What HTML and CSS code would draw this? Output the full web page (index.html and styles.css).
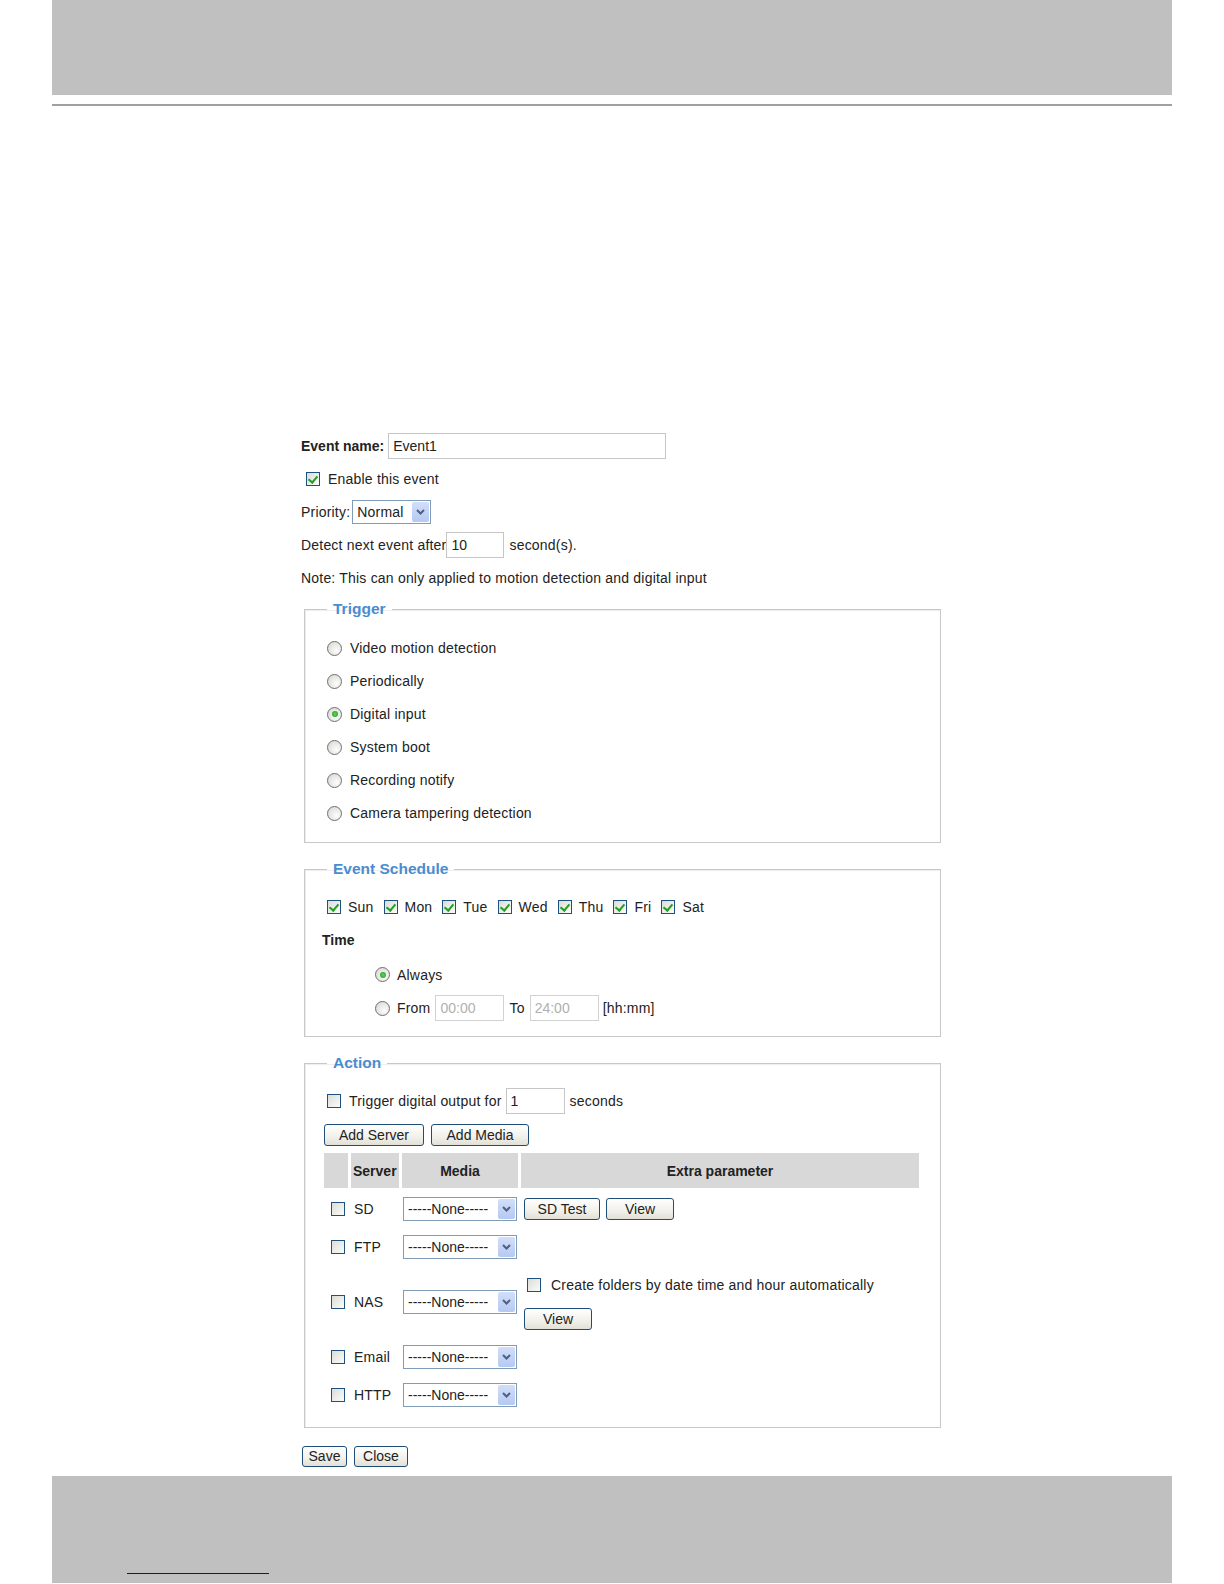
FILE: index.html
```html
<!DOCTYPE html>
<html lang="en">
<head>
    <meta charset="UTF-8">
    <title>Event Settings</title>
    <link rel="stylesheet" href="styles.css">
</head>
<body>
<div class="page-header"></div>
<div class="rule"></div>

<div class="form">
    <div class="row">
        <span class="bold">Event name:</span>
        <input class="text-input name-input" type="text" value="Event1">
    </div>
    <div class="row indent">
        <span class="check on"></span>
        <span class="after-box">Enable this event</span>
    </div>
    <div class="row">
        <span>Priority:</span>
        <span class="select priority-select">
            <span class="select-text">Normal</span>
            <span class="select-btn"><svg width="9" height="6" viewBox="0 0 9 6"><path d="M1 1 L4.5 4.5 L8 1" fill="none" stroke="#4d6185" stroke-width="2"/></svg></span>
        </span>
    </div>
    <div class="row">
        <span>Detect next event after</span>
        <input class="text-input detect-input" type="text" value="10">
        <span class="unit">second(s).</span>
    </div>
    <div class="row">
        <span>Note: This can only applied to motion detection and digital input</span>
    </div>

    <!-- Trigger -->
    <fieldset class="box trigger-box">
        <legend>Trigger</legend>
        <div class="row"><span class="radio"></span><span class="after-box">Video motion detection</span></div>
        <div class="row"><span class="radio"></span><span class="after-box">Periodically</span></div>
        <div class="row"><span class="radio on"></span><span class="after-box">Digital input</span></div>
        <div class="row"><span class="radio"></span><span class="after-box">System boot</span></div>
        <div class="row"><span class="radio"></span><span class="after-box">Recording notify</span></div>
        <div class="row"><span class="radio"></span><span class="after-box">Camera tampering detection</span></div>
    </fieldset>

    <!-- Event Schedule -->
    <fieldset class="box schedule-box">
        <legend>Event Schedule</legend>
        <div class="row days">
            <span class="check on"></span><span class="day">Sun</span>
            <span class="check on"></span><span class="day">Mon</span>
            <span class="check on"></span><span class="day">Tue</span>
            <span class="check on"></span><span class="day">Wed</span>
            <span class="check on"></span><span class="day">Thu</span>
            <span class="check on"></span><span class="day">Fri</span>
            <span class="check on"></span><span class="day">Sat</span>
        </div>
        <div class="row time-title"><span class="bold">Time</span></div>
        <div class="row time-row always-row"><span class="radio on"></span><span class="after-box">Always</span></div>
        <div class="row time-row from-row">
            <span class="radio"></span><span class="after-box">From</span>
            <input class="text-input time-input" type="text" value="00:00" disabled>
            <span class="to-label">To</span>
            <input class="text-input time-input" type="text" value="24:00" disabled>
            <span class="hint">[hh:mm]</span>
        </div>
    </fieldset>

    <!-- Action -->
    <fieldset class="box action-box">
        <legend>Action</legend>
        <div class="row">
            <span class="check"></span><span class="after-box">Trigger digital output for</span>
            <input class="text-input output-input" type="text" value="1">
            <span class="unit">seconds</span>
        </div>
        <div class="button-row">
            <button class="btn add-server">Add Server</button>
            <button class="btn add-media">Add Media</button>
        </div>

        <div class="server-table">
            <div class="th"></div>
            <div class="th th-server">Server</div>
            <div class="th th-center">Media</div>
            <div class="th th-center">Extra parameter</div>

            <div class="td td-check"><span class="check"></span></div>
            <div class="td td-name">SD</div>
            <div class="td"><span class="select media-select"><span class="select-text">-----None-----</span><span class="select-btn"><svg width="9" height="6" viewBox="0 0 9 6"><path d="M1 1 L4.5 4.5 L8 1" fill="none" stroke="#4d6185" stroke-width="2"/></svg></span></span></div>
            <div class="td td-extra"><button class="btn sd-test">SD Test</button><button class="btn view-btn">View</button></div>

            <div class="td td-check"><span class="check"></span></div>
            <div class="td td-name">FTP</div>
            <div class="td"><span class="select media-select"><span class="select-text">-----None-----</span><span class="select-btn"><svg width="9" height="6" viewBox="0 0 9 6"><path d="M1 1 L4.5 4.5 L8 1" fill="none" stroke="#4d6185" stroke-width="2"/></svg></span></span></div>
            <div class="td td-extra"></div>

            <div class="td td-check tall"><span class="check"></span></div>
            <div class="td td-name tall">NAS</div>
            <div class="td tall"><span class="select media-select"><span class="select-text">-----None-----</span><span class="select-btn"><svg width="9" height="6" viewBox="0 0 9 6"><path d="M1 1 L4.5 4.5 L8 1" fill="none" stroke="#4d6185" stroke-width="2"/></svg></span></span></div>
            <div class="td td-extra tall nas-extra">
                <div class="folder-line"><span class="check"></span><span class="after-box">Create folders by date time and hour automatically</span></div>
                <button class="btn view-btn">View</button>
            </div>

            <div class="td td-check"><span class="check"></span></div>
            <div class="td td-name">Email</div>
            <div class="td"><span class="select media-select"><span class="select-text">-----None-----</span><span class="select-btn"><svg width="9" height="6" viewBox="0 0 9 6"><path d="M1 1 L4.5 4.5 L8 1" fill="none" stroke="#4d6185" stroke-width="2"/></svg></span></span></div>
            <div class="td td-extra"></div>

            <div class="td td-check"><span class="check"></span></div>
            <div class="td td-name">HTTP</div>
            <div class="td"><span class="select media-select"><span class="select-text">-----None-----</span><span class="select-btn"><svg width="9" height="6" viewBox="0 0 9 6"><path d="M1 1 L4.5 4.5 L8 1" fill="none" stroke="#4d6185" stroke-width="2"/></svg></span></span></div>
            <div class="td td-extra"></div>
        </div>
    </fieldset>

    <div class="bottom-buttons">
        <button class="btn save-btn">Save</button>
        <button class="btn close-btn">Close</button>
    </div>
</div>

<div class="page-footer">
    <a class="footer-link" href="#"></a>
</div>
</body>
</html>
```

FILE: styles.css
```css
body {
    margin: 0;
    font-family: "Liberation Sans", Arial, sans-serif;
    font-size: 14px;
    letter-spacing: 0.2px;
    color: #222;
    background: #fff;
}

.page-header {
    height: 95px;
    margin: 0 52px;
    background: #c0c0c0;
}

.rule {
    height: 2px;
    margin: 9px 52px 0;
    background: #a0a0a0;
}

.form {
    margin: 323px 0 0 301px;
    width: 640px;
}

.row {
    display: flex;
    align-items: center;
    height: 33px;
    white-space: nowrap;
}

.indent {
    padding-left: 5px;
}

.bold {
    font-weight: bold;
    letter-spacing: 0;
}

.text-input {
    box-sizing: border-box;
    height: 26px;
    border: 1px solid #c6c6c6;
    padding: 0 4px;
    font-family: "Liberation Sans", Arial, sans-serif;
    font-size: 14px;
    color: #222;
    background: #fff;
    outline: none;
}

.name-input {
    width: 278px;
    margin-left: 4px;
}

.detect-input {
    width: 58px;
    margin-left: 0;
}

.unit {
    margin-left: 5px;
}

/* checkboxes and radios */
.check {
    position: relative;
    flex: none;
    box-sizing: border-box;
    width: 14px;
    height: 14px;
    border: 1px solid #1c5180;
    background: linear-gradient(135deg, #dcdcd7, #fbfbf9);
}

.check.on::after {
    content: "";
    position: absolute;
    left: 3px;
    top: 1px;
    width: 4px;
    height: 7px;
    border: solid #21a121;
    border-width: 0 2px 2px 0;
    transform: rotate(40deg);
}

.radio {
    position: relative;
    flex: none;
    box-sizing: border-box;
    width: 15px;
    height: 15px;
    border: 1px solid #6f6f6f;
    border-radius: 50%;
    background: radial-gradient(circle at 65% 65%, #fdfdfd, #d4d4cf);
}

.radio.on::after {
    content: "";
    position: absolute;
    left: 3.5px;
    top: 3.5px;
    width: 6px;
    height: 6px;
    border-radius: 50%;
    background: radial-gradient(circle, #5fd35f, #1e9a1e);
}

.after-box {
    margin-left: 8px;
}

/* select */
.select {
    box-sizing: border-box;
    display: flex;
    align-items: stretch;
    height: 24px;
    border: 1px solid #7f9db9;
    background: #fff;
}

.select-text {
    flex: 1;
    display: flex;
    align-items: center;
    padding-left: 4px;
}

.select-btn {
    width: 17px;
    margin: 1px;
    display: flex;
    align-items: center;
    justify-content: center;
    background: linear-gradient(#d2def9, #b6c9f3);
    border-radius: 2px;
}

.priority-select {
    width: 79px;
    margin-left: 2px;
}

.media-select {
    width: 114px;
    margin-left: 1px;
}

.media-select .select-text {
    padding-left: 4px;
    letter-spacing: 0;
}

/* fieldsets */
.box {
    width: 637px;
    box-sizing: border-box;
    margin: 17px 0 0 3px;
    padding: 12.5px 0 12.5px 22px;
    border: 1px solid #c8c8c8;
    box-shadow: inset 1px 1px 0 #eee;
}

.box legend {
    margin-left: 0;
    padding: 0 6px;
    line-height: 18px;
    font-size: 15.5px;
    font-weight: bold;
    letter-spacing: 0;
    color: #4a8cd0;
}

.trigger-box {
    margin-top: 6px;
    padding-top: 13.5px;
}

.days .day {
    margin: 0 10px 0 7px;
}

.time-title {
    margin-left: -5px;
}

.always-row {
    height: 36px;
    padding-left: 48px;
}

.from-row {
    height: 31px;
    padding-left: 48px;
}

.time-row .after-box {
    margin-left: 7px;
}

.time-input {
    width: 69px;
    margin-left: 5px;
    color: #b0b0b0;
    border-color: #d2d2d2;
}

.to-label {
    margin-left: 5px;
}

.hint {
    margin-left: 4px;
}

.output-input {
    width: 59px;
    margin-left: 4px;
}

/* buttons */
.btn {
    box-sizing: border-box;
    height: 22px;
    padding: 0;
    border: 1px solid #1f4d7a;
    border-radius: 3px;
    background: linear-gradient(#ffffff, #f1f0ea 60%, #e2e0d6);
    font-family: "Liberation Sans", Arial, sans-serif;
    font-size: 14px;
    color: #222;
}

.button-row {
    display: flex;
    gap: 7px;
    margin-top: 6.5px;
    margin-left: -3px;
}

.add-server { width: 100px; }
.add-media { width: 98px; }

/* server table */
.server-table {
    display: grid;
    grid-template-columns: 24px 48px 116px 398px;
    column-gap: 3px;
    margin: 7px 0 0 -3px;
}

.th {
    height: 35px;
    margin-bottom: 2px;
    display: flex;
    align-items: center;
    background: #d8d8d8;
    font-weight: bold;
    letter-spacing: 0;
}

.th-server {
    padding-left: 2px;
    overflow: visible;
}

.th-center {
    justify-content: center;
}

.td {
    height: 38px;
    display: flex;
    align-items: center;
}

.td.tall {
    height: 72px;
}

.td-check {
    padding-left: 7px;
}

.td-name {
    padding-left: 3px;
}

.td-extra {
    padding-left: 3px;
    gap: 6px;
}

.sd-test { width: 76px; }
.view-btn { width: 68px; }

.nas-extra {
    flex-direction: column;
    align-items: flex-start;
    justify-content: center;
    gap: 13px;
}

.folder-line {
    display: flex;
    align-items: center;
    height: 20px;
    padding-left: 3px;
}

.folder-line .after-box {
    margin-left: 10px;
}

.bottom-buttons {
    display: flex;
    gap: 7px;
    margin-top: 18px;
    margin-left: 1px;
}

.save-btn { width: 45px; height: 21px; }
.close-btn { width: 54px; height: 21px; }

.page-footer {
    height: 107px;
    margin: 9px 52px 0;
    background: #c0c0c0;
    padding-top: 97px;
    box-sizing: border-box;
}

.footer-link {
    display: block;
    width: 142px;
    margin-left: 75px;
    border-bottom: 1px solid #0000ff;
}
```
